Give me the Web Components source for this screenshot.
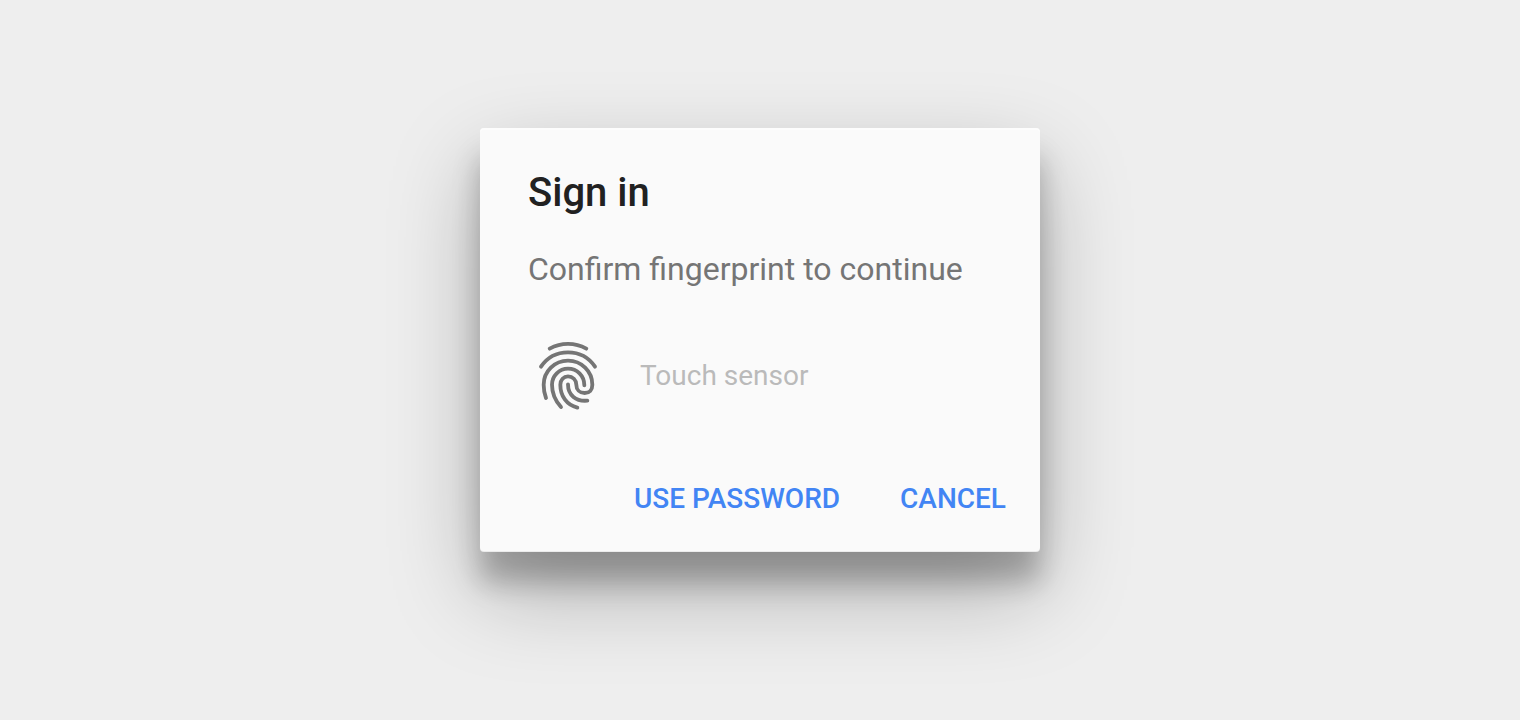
<!DOCTYPE html>
<html lang="en">
<head>
<meta charset="utf-8">
<meta name="viewport" content="width=device-width, initial-scale=1">
<title>Sign in</title>
<style>
  body { margin: 0; background: #eeeeee; font-family: Roboto, "Noto Sans", sans-serif; }
</style>
</head>
<body>
<sign-in-screen></sign-in-screen>

<template id="screen-template">
  <style>
    :host { display: block; }
    main {
      box-sizing: border-box;
      min-height: 100vh;
      padding: 40px 24px 80px;
      display: flex;
      align-items: center;
      justify-content: center;
    }
  </style>
  <main>
    <alert-dialog>
      <span slot="title">Sign in</span>
      <span slot="message">Confirm fingerprint to continue</span>
      <sensor-status slot="content">Touch sensor</sensor-status>
      <text-button slot="actions">USE PASSWORD</text-button>
      <text-button slot="actions">CANCEL</text-button>
    </alert-dialog>
  </main>
</template>

<template id="dialog-template">
  <style>
    :host { display: block; width: 100%; max-width: 560px; }
    section {
      background: #fafafa;
      border-radius: 4px;
      box-shadow: inset 0 2px 0 rgba(255,255,255,.6), inset 0 -1px 0 rgba(0,0,0,.06),
        0 38px 90px rgba(0,0,0,.28), 0 30px 28px rgba(0,0,0,.24);
    }
    .body { padding: 41px 48px 0; }
    h1 { margin: 0; font-size: 40px; line-height: 48px; font-weight: 500; color: #212121; }
    p { margin: 32px 0 43px; font-size: 32px; line-height: 40px; color: #757575; }
    footer { display: flex; flex-wrap: wrap; justify-content: flex-end; gap: 28px; padding: 43px 18px 17px; }
  </style>
  <section role="dialog" aria-labelledby="title" aria-describedby="message">
    <div class="body">
      <h1 id="title"><slot name="title"></slot></h1>
      <p id="message"><slot name="message"></slot></p>
      <slot name="content"></slot>
    </div>
    <footer><slot name="actions"></slot></footer>
  </section>
</template>

<template id="sensor-template">
  <style>
    :host { display: flex; align-items: center; gap: 32px; font-size: 28px; line-height: 32px; color: #bababa; }
    svg { display: block; flex: none; width: 80px; height: 88px; }
  </style>
  <svg viewBox="0 0 240 264" fill="none" stroke="#757575" stroke-width="11.5" stroke-linecap="round" stroke-linejoin="round" aria-hidden="true">
    <path d="M65 50A112 112 0 0 1 175 50"/>
    <path d="M39 104C57 77 87 61 120 61C153 61 183 77 201 104"/>
    <path d="M54 198C49 185 47 173 47 158C47 118 80 86 120 86C160 86 193 118 193 158C193 174 184 183 170 183C155 183 145 173 145 158C145 144 134 133 120 133C107 133 97 144 97 158C97 192 116 219 148 227"/>
    <path d="M99 225C81 205 72 185 72 158C72 131 94 110 120 110C147 110 169 131 169 160"/>
    <path d="M120 157C120 190 144 209 178 206"/>
  </svg>
  <span role="status"><slot></slot></span>
</template>

<template id="button-template">
  <style>
    :host { display: block; }
    button {
      display: block;
      height: 72px;
      padding: 0 16px;
      border: 0;
      border-radius: 4px;
      background: transparent;
      color: #4285f4;
      font: inherit;
      font-size: 28px;
      line-height: 32px;
      font-weight: 500;
      cursor: pointer;
    }
    button:hover { background: rgba(66,133,244,.08); }
  </style>
  <button type="button"><slot></slot></button>
</template>

<script>
  class TemplateElement extends HTMLElement {
    constructor() {
      super();
      const template = document.getElementById(this.constructor.template);
      this.attachShadow({ mode: "open" }).append(template.content.cloneNode(true));
    }
  }
  class TextButton extends TemplateElement { static template = "button-template"; }
  class SensorStatus extends TemplateElement { static template = "sensor-template"; }
  class AlertDialog extends TemplateElement { static template = "dialog-template"; }
  class SignInScreen extends TemplateElement { static template = "screen-template"; }

  customElements.define("text-button", TextButton);
  customElements.define("sensor-status", SensorStatus);
  customElements.define("alert-dialog", AlertDialog);
  customElements.define("sign-in-screen", SignInScreen);
</script>
</body>
</html>
